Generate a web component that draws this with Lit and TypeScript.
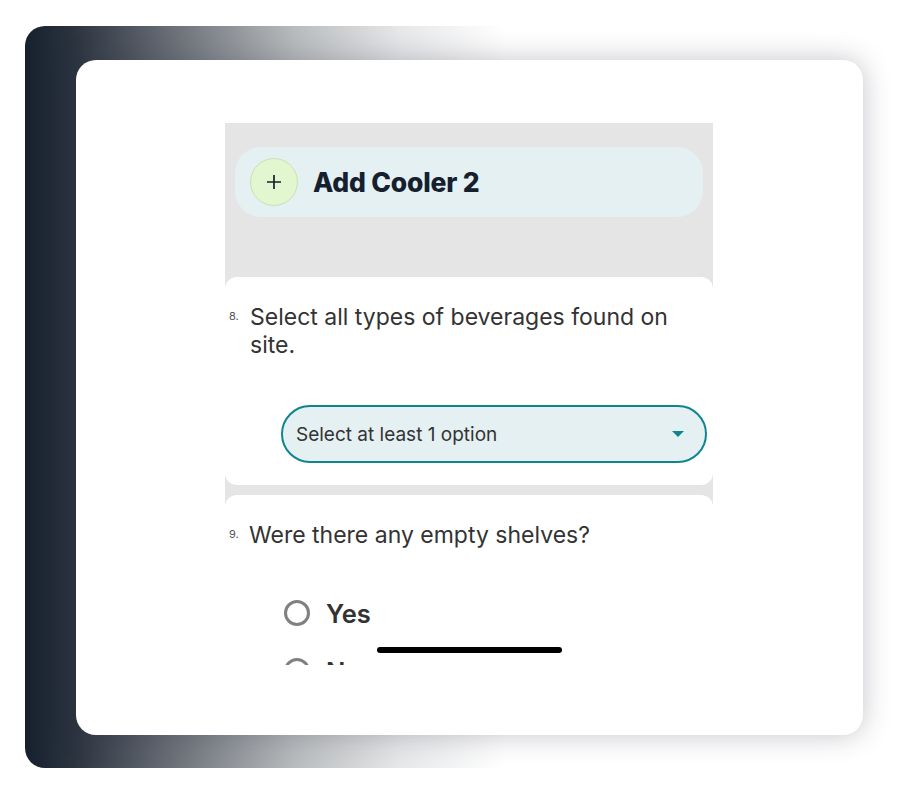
import { LitElement, html, css } from "lit";
import { customElement } from "lit/decorators.js";

@customElement("app-root")
export class AppRoot extends LitElement {
  static styles = css`
    :host { display: block; width: 921px; height: 795px; background: #fff; overflow: hidden; font-family: "Inter", "Liberation Sans", sans-serif; }
    .stage { padding: 26px 0 0 25px; }
    .panel { width: 838px; height: 742px; box-sizing: border-box; padding: 34px 0 0 51px; border-radius: 20px 0 0 20px;
      background: linear-gradient(90deg, #15202e 0, #2c3440 50px, #6d727a 151px, #b8bbbd 269px, #e6e7e9 375px, rgba(255,255,255,0) 481px); }
    .card { width: 787px; height: 675px; box-sizing: border-box; padding: 63px 0 0 149px; background: #fff; border-radius: 20px;
      box-shadow: 0 0 28px rgba(40,44,60,0.28); }
    .phone { position: relative; width: 488px; height: 542px; background: #e5e5e5; overflow: hidden; }
    .top { height: 154px; box-sizing: border-box; padding: 24px 10px 0; }
    .pill { height: 70px; display: flex; align-items: center; gap: 15px; padding-left: 15px; background: #e5f0f3; border-radius: 26px; }
    .plus { width: 48px; height: 48px; box-sizing: border-box; border: 1px solid #c8e2b4; border-radius: 50%; background: #e2f6cf; display: flex; align-items: center; justify-content: center; }
    .pill h2 { margin: 0; font-size: 26.5px; font-weight: 800; color: #15202e; letter-spacing: -0.2px; }
    .section { background: #fff; border-radius: 12px; }
    .s1 { height: 208px; box-sizing: border-box; padding-top: 26px; margin-bottom: 10px; }
    .s2 { height: 170px; border-radius: 12px 12px 0 0; box-sizing: border-box; padding-top: 26px; }
    .q { display: flex; padding-left: 4px; align-items: flex-start; color: #333; font-size: 23px; line-height: 28px; }
    .n { width: 21px; flex: none; font-size: 11px; line-height: 26px; color: #555; }
    .s2 .n { width: 20px; }
    .q p { margin: 0; flex: 1; padding-right: 30px; }
    .select { margin: 46px 6px 0 56px; height: 58px; box-sizing: border-box; display: flex; align-items: center; justify-content: space-between; padding: 0 21px 0 13px;
      border: 2.5px solid #0f8590; border-radius: 29px; background: #e5f0f3; color: #333; font-size: 19px; }
    .caret { width: 0; height: 0; border: 6px solid transparent; border-top: 6px solid #0f8590; border-bottom: 0; }
    .radio { display: flex; align-items: center; gap: 16px; margin: 0 0 0 59px; height: 58px; font-size: 25.5px; font-weight: 600; color: #333; }
    .radios { margin-top: 35px; }
    .dot { width: 26px; height: 26px; flex: none; box-sizing: border-box; border: 3px solid #808080; border-radius: 50%; }
    .bar { position: absolute; left: 152px; top: 524px; width: 185px; height: 6px; background: #000; border-radius: 3px; }
  `;
  render() {
    return html`<div class="stage"><div class="panel"><div class="card"><div class="phone">
      <div class="top"><div class="pill">
        <div class="plus"><svg width="16" height="16" viewBox="0 0 16 16"><path d="M8 1v14M1 8h14" stroke="#15202e" stroke-width="1.7" fill="none"/></svg></div>
        <h2>Add Cooler 2</h2>
      </div></div>
      <div class="section s1">
        <div class="q"><span class="n">8.</span><p>Select all types of beverages found on site.</p></div>
        <div class="select"><span>Select at least 1 option</span><span class="caret"></span></div>
      </div>
      <div class="section s2">
        <div class="q"><span class="n">9.</span><p>Were there any empty shelves?</p></div>
        <div class="radios">
          <div class="radio"><span class="dot"></span><span>Yes</span></div>
          <div class="radio"><span class="dot"></span><span>No</span></div>
        </div>
      </div>
      <div class="bar"></div>
    </div></div></div></div>`;
  }
}
